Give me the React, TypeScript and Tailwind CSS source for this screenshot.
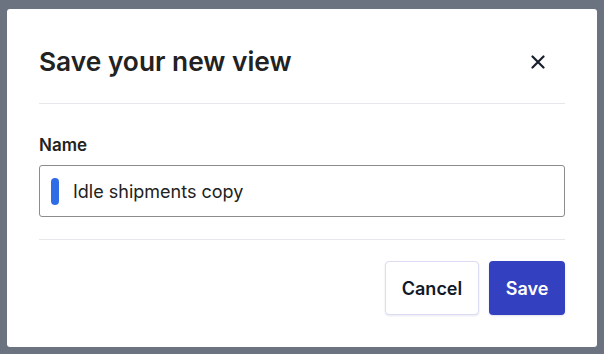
import React from "react";

export default function App() {
  return (
    <div className="w-[604px] h-[354px] bg-[#6b7280] pl-[7px] pt-[9px] font-['Inter',sans-serif] overflow-hidden">
      <div className="w-[590px] h-[338px] bg-white rounded-[3px] px-[32px] flex flex-col">
        <div className="pt-[36px] pb-[24px] border-b border-[#e5e7eb] flex items-center justify-between">
          <h2 className="text-[26.3px] leading-[34px] font-semibold text-[#222222]">Save your new view</h2>
          <button className="w-[24px] h-[24px] flex items-center justify-center mr-[15px] text-[#1a1f2e]">
            <svg width="14" height="14" viewBox="0 0 14 14" fill="none" stroke="currentColor" strokeWidth="2.2" strokeLinecap="round">
              <path d="M1.5 1.5 L12.5 12.5 M12.5 1.5 L1.5 12.5" />
            </svg>
          </button>
        </div>
        <div className="pt-[29px] pb-[22px] border-b border-[#e5e7eb]">
          <div className="text-[17px] leading-[24px] font-semibold text-[#222222]">Name</div>
          <div className="mt-[8px] h-[52px] border border-[#8c8c8c] rounded-[3px] flex items-center pl-[11px]">
            <span className="w-[8px] h-[27px] rounded-full bg-[#2f6de6]"></span>
            <span className="ml-[14px] text-[18px] text-[#222222]">Idle shipments copy</span>
          </div>
        </div>
        <div className="pt-[21px] flex justify-end gap-[10px]">
          <button className="w-[94px] h-[54px] rounded-[4px] border border-[#dcdcf4] bg-white shadow-[0_1px_2px_rgba(60,60,140,0.12)] text-[18px] font-semibold text-[#111827]">Cancel</button>
          <button className="w-[76px] h-[54px] rounded-[4px] bg-[#3341c0] text-[18px] font-semibold text-white shadow-[0_1px_2px_rgba(60,60,140,0.15)]">Save</button>
        </div>
      </div>
    </div>
  );
}
